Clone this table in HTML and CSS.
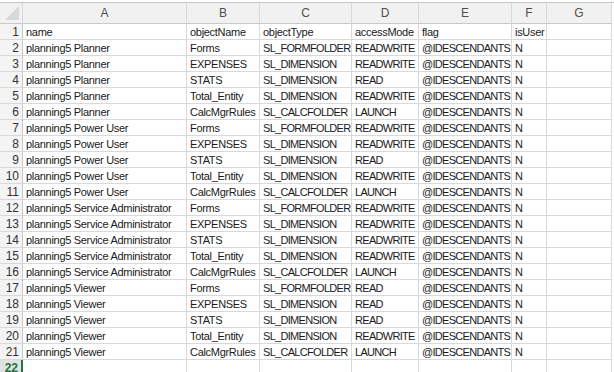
FILE: index.html
```html
<!DOCTYPE html>
<html>
<head>
<meta charset="utf-8">
<link rel="stylesheet" href="styles.css">
</head>
<body>
<div class="sheet">
  <div class="grid">
    <div class="hd corner"><svg width="22" height="19" viewBox="0 0 22 19"><polygon points="5,17 19,17 19,3" fill="#d8d8d8"/></svg></div>
    <div class="hd">A</div><div class="hd">B</div><div class="hd">C</div><div class="hd">D</div><div class="hd">E</div><div class="hd">F</div><div class="hd">G</div>

    <div class="rn">1</div><div class="c">name</div><div class="c">objectName</div><div class="c lc">objectType</div><div class="c lc">accessMode</div><div class="c lc">flag</div><div class="c">isUser</div><div class="c"></div>
    <div class="rn">2</div><div class="c">planning5 Planner</div><div class="c">Forms</div><div class="c">SL_FORMFOLDER</div><div class="c">READWRITE</div><div class="c">@IDESCENDANTS</div><div class="c">N</div><div class="c"></div>
    <div class="rn">3</div><div class="c">planning5 Planner</div><div class="c">EXPENSES</div><div class="c">SL_DIMENSION</div><div class="c">READWRITE</div><div class="c">@IDESCENDANTS</div><div class="c">N</div><div class="c"></div>
    <div class="rn">4</div><div class="c">planning5 Planner</div><div class="c">STATS</div><div class="c">SL_DIMENSION</div><div class="c">READ</div><div class="c">@IDESCENDANTS</div><div class="c">N</div><div class="c"></div>
    <div class="rn">5</div><div class="c">planning5 Planner</div><div class="c">Total_Entity</div><div class="c">SL_DIMENSION</div><div class="c">READWRITE</div><div class="c">@IDESCENDANTS</div><div class="c">N</div><div class="c"></div>
    <div class="rn">6</div><div class="c">planning5 Planner</div><div class="c">CalcMgrRules</div><div class="c">SL_CALCFOLDER</div><div class="c">LAUNCH</div><div class="c">@IDESCENDANTS</div><div class="c">N</div><div class="c"></div>
    <div class="rn">7</div><div class="c">planning5 Power User</div><div class="c">Forms</div><div class="c">SL_FORMFOLDER</div><div class="c">READWRITE</div><div class="c">@IDESCENDANTS</div><div class="c">N</div><div class="c"></div>
    <div class="rn">8</div><div class="c">planning5 Power User</div><div class="c">EXPENSES</div><div class="c">SL_DIMENSION</div><div class="c">READWRITE</div><div class="c">@IDESCENDANTS</div><div class="c">N</div><div class="c"></div>
    <div class="rn">9</div><div class="c">planning5 Power User</div><div class="c">STATS</div><div class="c">SL_DIMENSION</div><div class="c">READ</div><div class="c">@IDESCENDANTS</div><div class="c">N</div><div class="c"></div>
    <div class="rn">10</div><div class="c">planning5 Power User</div><div class="c">Total_Entity</div><div class="c">SL_DIMENSION</div><div class="c">READWRITE</div><div class="c">@IDESCENDANTS</div><div class="c">N</div><div class="c"></div>
    <div class="rn">11</div><div class="c">planning5 Power User</div><div class="c">CalcMgrRules</div><div class="c">SL_CALCFOLDER</div><div class="c">LAUNCH</div><div class="c">@IDESCENDANTS</div><div class="c">N</div><div class="c"></div>
    <div class="rn">12</div><div class="c">planning5 Service Administrator</div><div class="c">Forms</div><div class="c">SL_FORMFOLDER</div><div class="c">READWRITE</div><div class="c">@IDESCENDANTS</div><div class="c">N</div><div class="c"></div>
    <div class="rn">13</div><div class="c">planning5 Service Administrator</div><div class="c">EXPENSES</div><div class="c">SL_DIMENSION</div><div class="c">READWRITE</div><div class="c">@IDESCENDANTS</div><div class="c">N</div><div class="c"></div>
    <div class="rn">14</div><div class="c">planning5 Service Administrator</div><div class="c">STATS</div><div class="c">SL_DIMENSION</div><div class="c">READWRITE</div><div class="c">@IDESCENDANTS</div><div class="c">N</div><div class="c"></div>
    <div class="rn">15</div><div class="c">planning5 Service Administrator</div><div class="c">Total_Entity</div><div class="c">SL_DIMENSION</div><div class="c">READWRITE</div><div class="c">@IDESCENDANTS</div><div class="c">N</div><div class="c"></div>
    <div class="rn">16</div><div class="c">planning5 Service Administrator</div><div class="c">CalcMgrRules</div><div class="c">SL_CALCFOLDER</div><div class="c">LAUNCH</div><div class="c">@IDESCENDANTS</div><div class="c">N</div><div class="c"></div>
    <div class="rn">17</div><div class="c">planning5 Viewer</div><div class="c">Forms</div><div class="c">SL_FORMFOLDER</div><div class="c">READ</div><div class="c">@IDESCENDANTS</div><div class="c">N</div><div class="c"></div>
    <div class="rn">18</div><div class="c">planning5 Viewer</div><div class="c">EXPENSES</div><div class="c">SL_DIMENSION</div><div class="c">READ</div><div class="c">@IDESCENDANTS</div><div class="c">N</div><div class="c"></div>
    <div class="rn">19</div><div class="c">planning5 Viewer</div><div class="c">STATS</div><div class="c">SL_DIMENSION</div><div class="c">READ</div><div class="c">@IDESCENDANTS</div><div class="c">N</div><div class="c"></div>
    <div class="rn">20</div><div class="c">planning5 Viewer</div><div class="c">Total_Entity</div><div class="c">SL_DIMENSION</div><div class="c">READWRITE</div><div class="c">@IDESCENDANTS</div><div class="c">N</div><div class="c"></div>
    <div class="rn">21</div><div class="c">planning5 Viewer</div><div class="c">CalcMgrRules</div><div class="c">SL_CALCFOLDER</div><div class="c">LAUNCH</div><div class="c">@IDESCENDANTS</div><div class="c">N</div><div class="c"></div>
    <div class="rn sel">22</div><div class="c active"></div><div class="c"></div><div class="c"></div><div class="c"></div><div class="c"></div><div class="c"></div><div class="c"></div>
  </div>
</div>
</body>
</html>
```

FILE: styles.css
```css
html, body {
  margin: 0;
  padding: 0;
  background: #ffffff;
}
.sheet {
  padding-top: 2px;
  width: 614px;
  height: 372px;
  overflow: hidden;
  box-sizing: border-box;
}
.grid {
  display: grid;
  grid-template-columns: 23px 164px 73px 92px 67px 93px 35px 65px;
  grid-auto-rows: 16px;
  grid-template-rows: 21px;
  border-top: 1px solid #c6c6c6;
  font-family: "Liberation Sans", Arial, sans-serif;
  font-size: 11px;
  letter-spacing: -0.3px;
  color: #1a1a1a;
}
.hd {
  background: #f1f1f1;
  border-right: 1px solid #d9d9d9;
  border-bottom: 1px solid #c8c8c8;
  color: #505050;
  display: flex;
  align-items: center;
  justify-content: center;
  font-size: 12px;
  letter-spacing: 0;
}
.corner {
  align-items: flex-start;
  justify-content: flex-start;
}
.corner svg { display: block; }
.rn {
  background: #f4f4f4;
  border-right: 1px solid #c8c8c8;
  border-bottom: 1px solid #d9d9d9;
  color: #333333;
  display: flex;
  align-items: center;
  justify-content: flex-end;
  padding-right: 3px;
  font-size: 12px;
  letter-spacing: 0;
  box-sizing: border-box;
}
.rn.sel {
  background: #e1e1e1;
  color: #217346;
  font-weight: bold;
  border-right: 2px solid #217346;
}
.c {
  border-right: 1px solid #d9d9d9;
  border-bottom: 1px solid #d9d9d9;
  padding-left: 3px;
  display: flex;
  align-items: center;
  white-space: nowrap;
  overflow: hidden;
  box-sizing: border-box;
}
.c:nth-child(8n+4), .c:nth-child(8n+5), .c:nth-child(8n+6) {
  letter-spacing: -0.7px;
}
.c.lc {
  letter-spacing: -0.3px;
}
```
